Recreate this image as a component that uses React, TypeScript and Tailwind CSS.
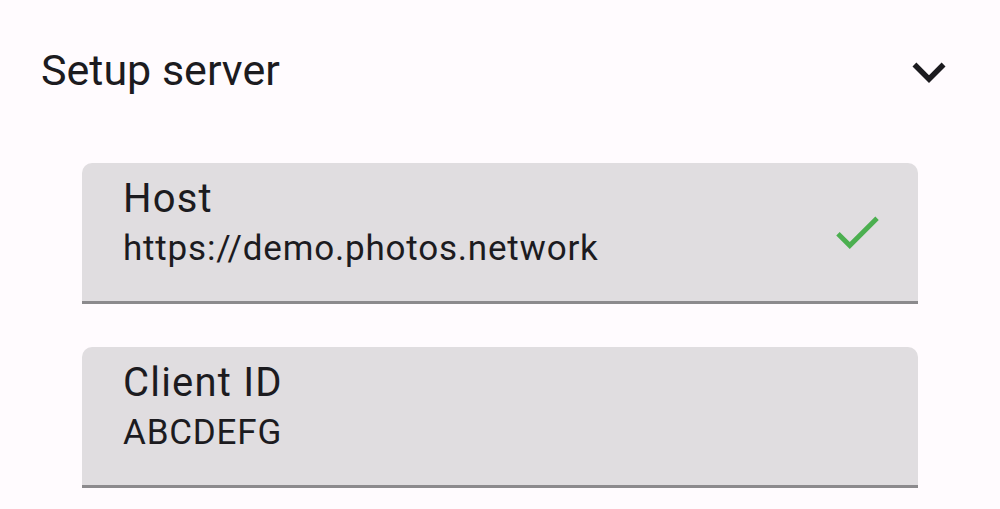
export default function App() {
  const fields = [
    { label: 'Host', value: 'https://demo.photos.network', valid: true },
    { label: 'Client ID', value: 'ABCDEFG', valid: false },
  ];

  return (
    <div className="min-h-[509px] w-full bg-[#fffbfe] font-['Roboto',sans-serif] text-[#1c1b1f]">
      <div className="flex items-start justify-between pt-[39px] pr-[38px] pl-[41px]">
        <h2 className="mt-[5px] text-[43px] leading-[52px]">Setup server</h2>
        <svg viewBox="0 0 24 24" className="h-[66px] w-[66px]" fill="#1c1b1f" aria-hidden>
          <path d="M16.59 8.59L12 13.17 7.41 8.59 6 10l6 6 6-6z" />
        </svg>
      </div>

      <div className="mt-[58px] flex flex-col gap-[43px] px-[82px]">
        {fields.map((f) => (
          <div
            key={f.label}
            className="flex h-[141px] rounded-t-[10px] border-b-[3px] border-[#8c8a8d] bg-[#e0dde0]"
          >
            <div className="flex-1 pt-[12px] pl-[41px]">
              <div className="text-[40px] leading-[48px] tracking-[1.2px]">{f.label}</div>
              <div className="mt-[4px] text-[35px] leading-[44px] tracking-[0.8px]">{f.value}</div>
            </div>
            {f.valid && (
              <svg viewBox="0 0 24 24" className="mr-[32px] h-[58px] w-[58px] self-center" fill="#4caf50" aria-hidden>
                <path d="M9 16.17L4.83 12l-1.42 1.41L9 19 21 7l-1.41-1.41z" />
              </svg>
            )}
          </div>
        ))}
      </div>
    </div>
  );
}
